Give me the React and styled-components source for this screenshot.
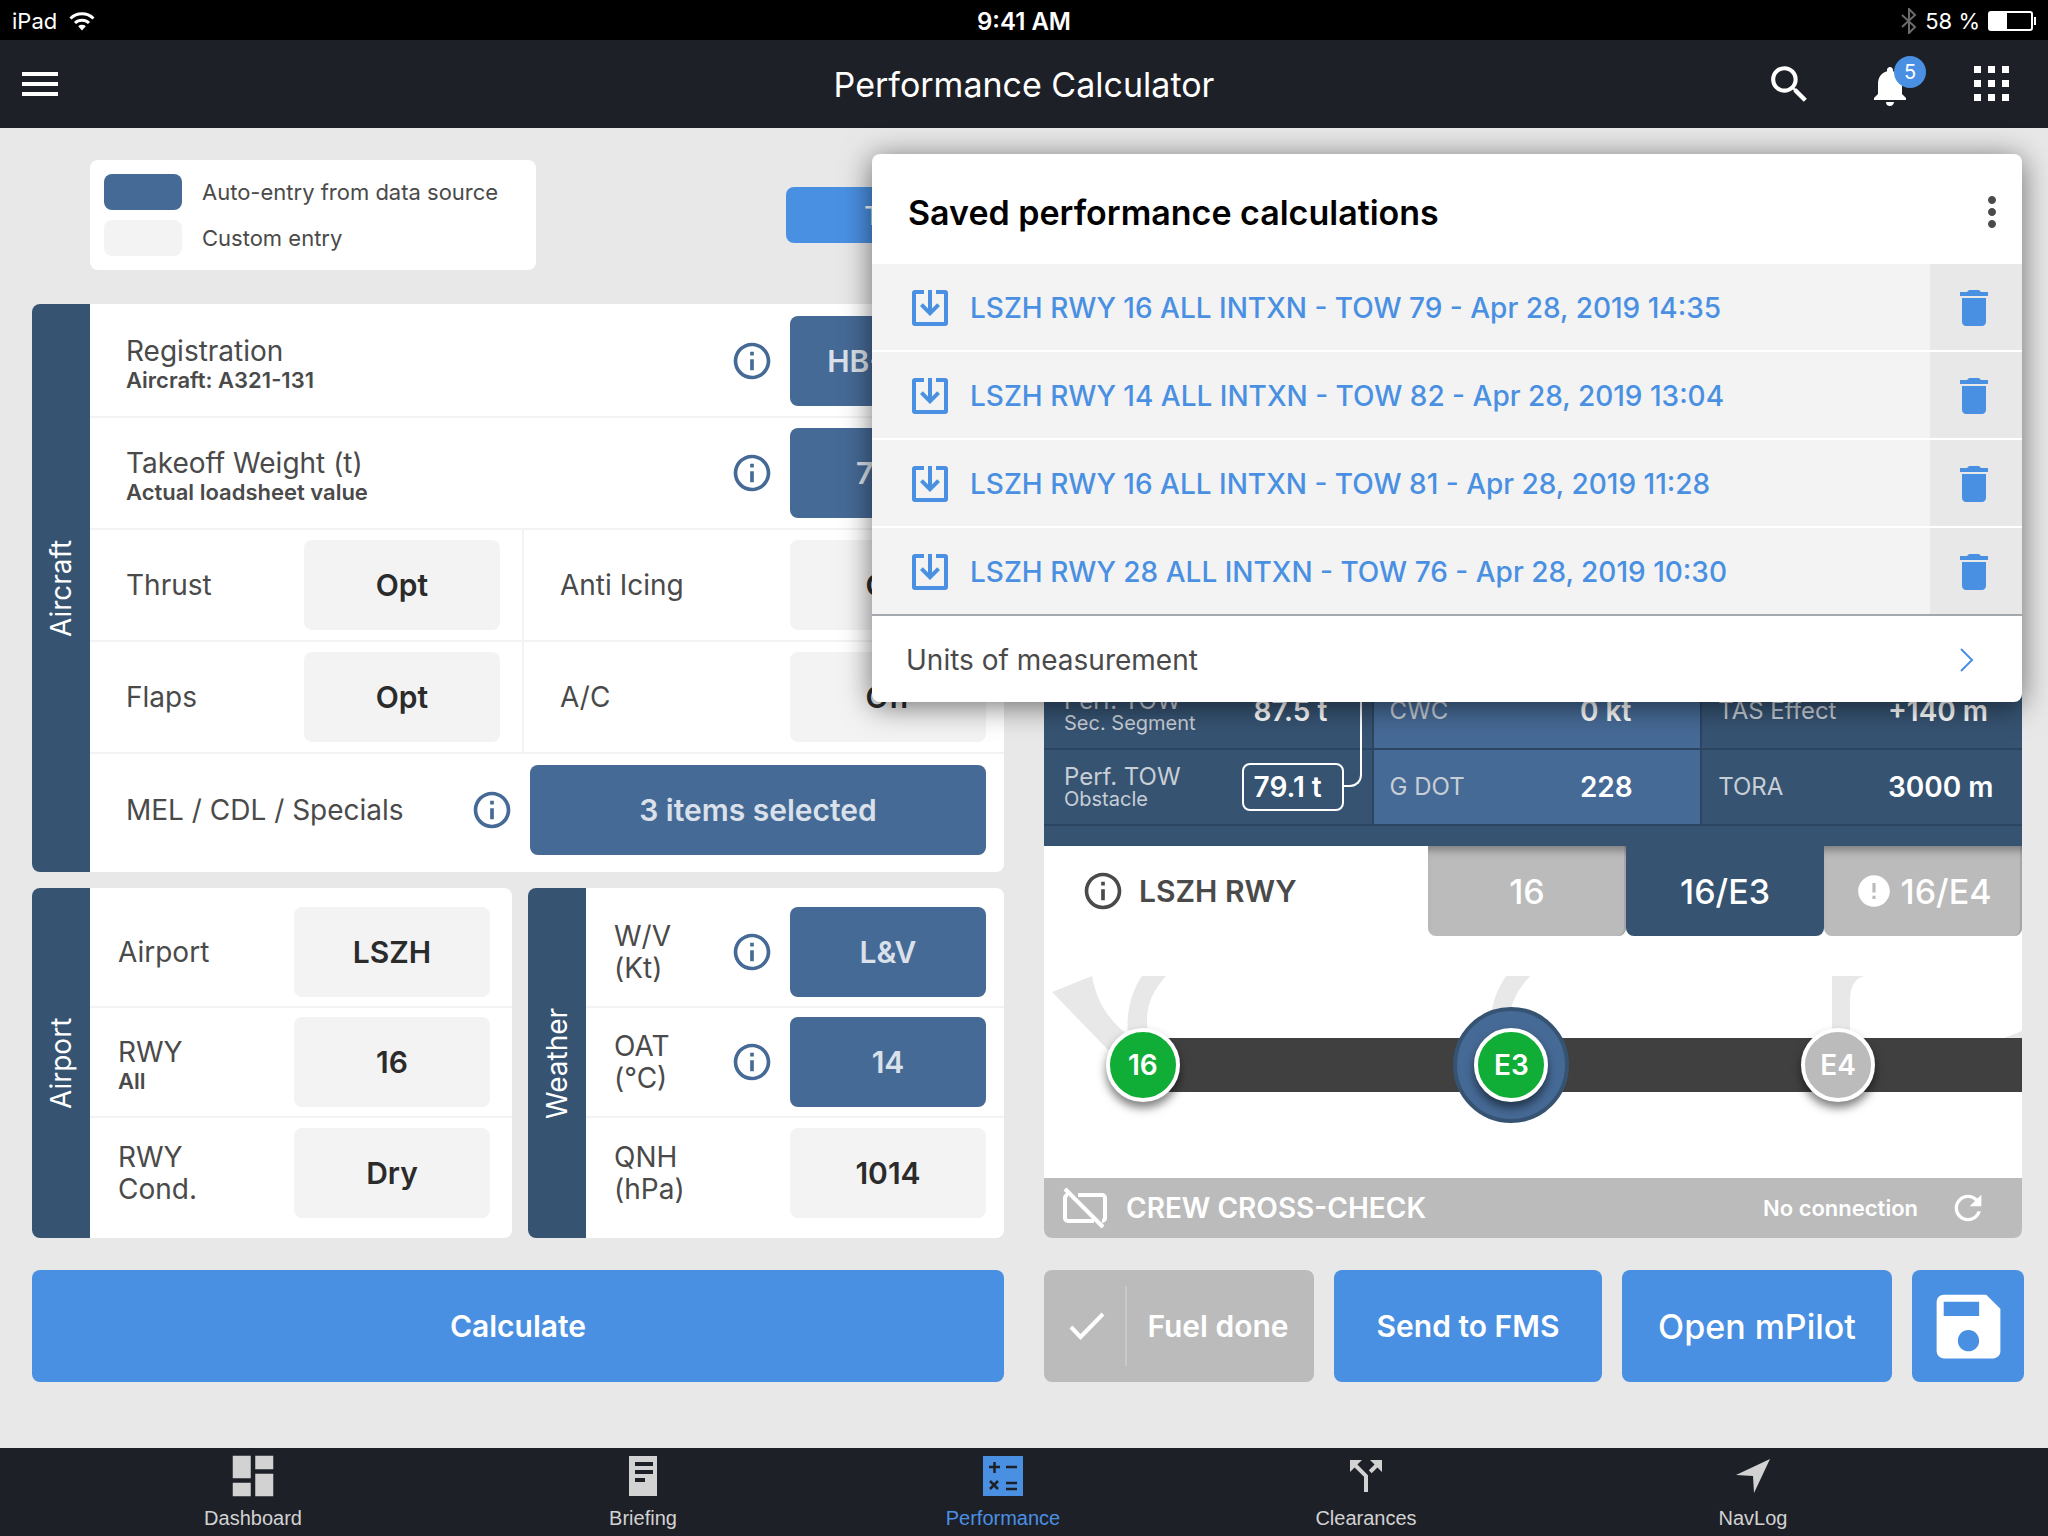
import React from "react";
import styled, { createGlobalStyle } from "styled-components";
import {
  MdSearch,
  MdNotifications,
  MdMoreVert,
  MdDelete,
  MdInfoOutline,
  MdError,
  MdRefresh,
  MdSave,
  MdDashboard,
  MdCallSplit,
} from "react-icons/md";

const GlobalStyle = createGlobalStyle`
  * {
    box-sizing: border-box;
  }
  body {
    margin: 0;
    background-color: #e8e8e8;
    color: #4a4a4a;
    font-family: Inter, "Liberation Sans", sans-serif;
  }
  button {
    font-family: inherit;
    border: 0;
    padding: 0;
    background: none;
    color: inherit;
    cursor: pointer;
  }
  svg {
    display: block;
    flex-shrink: 0;
  }
`;

const Page = styled.div`
  min-height: 100vh;
  display: flex;
  flex-direction: column;
`;

/* status bar + header */
const StatusBar = styled.div`
  height: 40px;
  padding: 2px 12px 0;
  display: grid;
  grid-template-columns: 1fr auto 1fr;
  align-items: center;
  background-color: #000;
  color: #fff;
  font-size: 22px;
`;
const StatusSide = styled.div`
  display: flex;
  align-items: center;
  justify-content: ${(props) => (props.$end ? "flex-end" : "flex-start")};
  gap: ${(props) => (props.$end ? "8px" : "12px")};
`;
const Clock = styled.div`
  font-size: 24px;
  font-weight: 600;
`;
const Header = styled.header`
  height: 88px;
  padding: 0 38px 0 22px;
  display: grid;
  grid-template-columns: 1fr auto 1fr;
  align-items: center;
  background-color: #1e2028;
  color: #fff;
`;
const HeaderStart = styled.div`
  display: flex;
  align-items: center;
`;
const HeaderTitle = styled.h1`
  margin: 0;
  padding-left: 16px;
  font-size: 34px;
  font-weight: 400;
`;
const HeaderActions = styled.div`
  display: flex;
  justify-content: flex-end;
  align-items: center;
  gap: 52px;
`;
const BellButton = styled.button`
  position: relative;
  padding-top: 4px;
`;
const AppsButton = styled.button`
  margin-left: 8px;
`;
const Badge = styled.span`
  position: absolute;
  top: -2px;
  right: -12px;
  width: 32px;
  height: 32px;
  border-radius: 50%;
  background-color: #4a90e2;
  font-size: 20px;
  line-height: 32px;
`;

/* page body */
const Main = styled.main`
  position: relative;
  flex: 1;
  padding: 32px 24px 32px 32px;
`;
const TopRow = styled.div`
  display: flex;
  align-items: center;
  gap: 250px;
  padding-left: 58px;
  margin-bottom: 34px;
`;
const Legend = styled.div`
  width: 446px;
  padding: 14px;
  display: flex;
  flex-direction: column;
  gap: 10px;
  border-radius: 8px;
  background-color: #fff;
`;
const LegendItem = styled.div`
  display: flex;
  align-items: center;
  gap: 20px;
  font-size: 22px;
`;
const Swatch = styled.span`
  width: 78px;
  height: 36px;
  border-radius: 8px;
  background-color: ${(props) => (props.$auto ? "#466a96" : "#f3f3f3")};
`;
const ModeButton = styled.button`
  width: 250px;
  height: 56px;
  border-radius: 8px;
  background-color: #4a90e2;
  color: #fff;
  font-size: 26px;
  font-weight: 500;
`;
const Columns = styled.div`
  display: grid;
  grid-template-columns: minmax(0, 972fr) minmax(0, 980fr);
  gap: 32px 40px;
`;
const Forms = styled.div`
  display: grid;
  grid-template-columns: minmax(0, 480fr) minmax(0, 476fr);
  gap: 16px;
`;
const Panel = styled.section`
  grid-column: ${(props) => (props.$wide ? "1 / -1" : "auto")};
  display: flex;
  border-radius: 8px;
  overflow: hidden;
  background-color: #fff;
`;
const PanelSide = styled.h2`
  margin: 0;
  width: 58px;
  flex-shrink: 0;
  display: flex;
  align-items: center;
  justify-content: center;
  writing-mode: vertical-rl;
  transform: rotate(180deg);
  background-color: #365372;
  color: #fff;
  font-size: 28px;
  font-weight: 400;
`;
const PanelBody = styled.div`
  flex: 1;
  min-width: 0;
  padding: ${(props) => (props.$wide ? "2px 0 6px" : "10px 0")};
`;
const Row = styled.div`
  display: flex;
  min-height: ${(props) => (props.$wide ? "112px" : "110px")};
  border-bottom: 2px solid #f3f3f3;

  &:last-child {
    border-bottom: 0;
  }
`;
const Cell = styled.div`
  flex: ${(props) => props.$grow || 1} 1 0;
  min-width: 0;
  display: flex;
  align-items: center;
  gap: 20px;
  padding-left: ${(props) => (props.$wide ? "36px" : "28px")};
  padding-right: ${(props) => (props.$inset ? "22px" : "18px")};

  & + & {
    border-left: 2px solid #f3f3f3;
  }
`;
const Label = styled.label`
  flex: 1;
  padding-top: ${(props) => (props.$sub ? "6px" : "0")};
  font-size: 28px;
  line-height: 32px;
  white-space: pre-line;
`;
const SubLabel = styled.span`
  display: block;
  font-size: 22px;
  line-height: 26px;
  font-weight: 600;
`;
const InfoButton = styled.button`
  margin: -4px;
  color: #466a96;
`;
const Field = styled.button`
  width: ${(props) => (props.$big ? "456px" : "196px")};
  height: 90px;
  border-radius: 8px;
  background-color: ${(props) => (props.$auto ? "#466a96" : "#f3f3f3")};
  color: ${(props) => (props.$auto ? "#dae1ea" : "#2b2b2b")};
  font-size: 30px;
  font-weight: 600;
`;

/* results card */
const Card = styled.section`
  margin-right: 2px;
  display: flex;
  flex-direction: column;
  border-radius: 8px;
  overflow: hidden;
  background-color: #fff;
`;
const Results = styled.div`
  flex: 1;
  display: flex;
  flex-direction: column;
  justify-content: flex-end;
  padding-bottom: 20px;
  background-color: #365372;
`;
const ResultTable = styled.table`
  width: 100%;
  table-layout: fixed;
  border-collapse: collapse;
`;
const ResultName = styled.th`
  height: 76px;
  padding: 0 0 0 ${(props) => (props.$first ? "20px" : "16px")};
  border-bottom: 2px solid #2c4560;
  border-left: ${(props) => (props.$first ? "0" : "2px solid #2c4560")};
  background-color: ${(props) => (props.$light ? "#466a96" : "transparent")};
  color: #c8ced6;
  font-size: 24px;
  line-height: 24px;
  font-weight: 400;
  text-align: left;
`;
const ResultNote = styled.span`
  display: block;
  font-size: 20px;
  line-height: 20px;
`;
const ResultValue = styled.td`
  padding: 0;
  border-bottom: 2px solid #2c4560;
  background-color: ${(props) => (props.$light ? "#466a96" : "transparent")};
  color: #fff;
  font-size: 28px;
  font-weight: 600;
  white-space: nowrap;
`;
const ValueBox = styled.span`
  position: relative;
  display: inline-flex;
  align-items: center;
  min-width: 102px;
  height: 48px;
  padding: 0 10px;
  border: 2px solid ${(props) => (props.$marked ? "#fff" : "transparent")};
  border-radius: 8px;
`;
const Connector = styled.span`
  position: absolute;
  left: 100%;
  bottom: 50%;
  width: 20px;
  height: 120px;
  border: solid #fff;
  border-width: 0 2px 2px 0;
  border-radius: 0 0 12px 0;
`;
const RunwayBar = styled.div`
  display: flex;
  height: 90px;
`;
const RunwayTitle = styled.div`
  flex: 1;
  display: flex;
  align-items: center;
  gap: 14px;
  padding-left: 37px;
  font-size: 30px;
  font-weight: 600;
`;
const RunwayTab = styled.button`
  width: 198px;
  display: flex;
  align-items: center;
  justify-content: center;
  gap: 8px;
  border-radius: 0 0 8px 8px;
  background-color: ${(props) => (props.$active ? "#365372" : "#bbb")};
  box-shadow: ${(props) =>
    props.$active
      ? "none"
      : "inset 0 10px 8px -6px rgba(0, 0, 0, 0.35), inset -2px 0 0 #a9a9a9"};
  color: #fff;
  font-size: 34px;
  font-weight: 500;
`;
const RunwayMap = styled.div`
  position: relative;
  margin-top: 40px;
`;
const MapDrawing = styled.svg`
  width: 100%;
  height: auto;
`;
const Node = styled.button`
  position: absolute;
  top: 44%;
  left: ${(props) => props.$left}%;
  transform: translate(-50%, -50%);
  width: 74px;
  height: 74px;
  border: 4px solid #fff;
  border-radius: 50%;
  background-color: ${(props) => (props.$ok ? "#10ad37" : "#bbb")};
  box-shadow: 0 6px 10px rgba(0, 0, 0, 0.5);
  color: #fff;
  font-size: 28px;
  font-weight: 600;
`;
const Halo = styled.span`
  position: absolute;
  top: 44%;
  left: ${(props) => props.$left}%;
  transform: translate(-50%, -50%);
  width: 116px;
  height: 116px;
  border: 4px solid #365372;
  border-radius: 50%;
  background-color: #466a96;
`;
const CrewBar = styled.div`
  height: 60px;
  padding: 0 34px 0 18px;
  display: flex;
  align-items: center;
  gap: 18px;
  background-color: #bbb;
  color: #fff;
  font-size: 28px;
  font-weight: 600;
`;
const CrewStatus = styled.span`
  margin-left: auto;
  padding-right: 12px;
  font-size: 22px;
`;

/* bottom actions */
const Action = styled.button`
  height: 112px;
  display: flex;
  align-items: center;
  justify-content: center;
  border-radius: 8px;
  background-color: ${(props) => (props.$done ? "#bbb" : "#4a90e2")};
  color: #fff;
  font-size: ${(props) => (props.$large ? "34px" : "30px")};
  font-weight: ${(props) => (props.$large ? 500 : 600)};
`;
const Actions = styled.div`
  display: grid;
  grid-template-columns: minmax(0, 270fr) minmax(0, 268fr) minmax(0, 270fr) 112px;
  gap: 20px;
`;
const CheckPart = styled.span`
  height: 80px;
  padding-right: 20px;
  margin-right: 20px;
  display: flex;
  align-items: center;
  border-right: 2px solid #c9c9c9;
`;

/* saved calculations popover */
const Popover = styled.aside`
  position: absolute;
  top: 26px;
  right: 26px;
  width: 1150px;
  max-width: calc(100% - 52px);
  border-radius: 8px;
  overflow: hidden;
  background-color: #fff;
  box-shadow: 0 4px 30px rgba(0, 0, 0, 0.55);
`;
const PopoverHead = styled.div`
  height: 110px;
  padding: 6px 6px 0 36px;
  display: flex;
  align-items: center;
  justify-content: space-between;
`;
const PopoverTitle = styled.h2`
  margin: 0;
  color: #000;
  font-size: 34px;
  font-weight: 600;
`;
const SavedList = styled.ul`
  margin: 0;
  padding: 0;
  list-style: none;
  display: flex;
  flex-direction: column;
  gap: 2px;
  border-bottom: 2px solid #a3a7ae;
`;
const SavedItem = styled.li`
  height: 86px;
  display: flex;
  background-color: #f3f3f3;
  color: #4a90e2;
`;
const LoadButton = styled.button`
  flex: 1;
  display: flex;
  align-items: center;
  gap: 22px;
  padding: 2px 0 0 40px;
  font-size: 28px;
  font-weight: 500;
`;
const DeleteButton = styled.button`
  width: 92px;
  padding: 2px 4px 0 0;
  display: flex;
  align-items: center;
  justify-content: center;
  background-color: #e8e8e8;
`;
const UnitsButton = styled.button`
  width: 100%;
  height: 86px;
  padding: 2px 48px 0 34px;
  display: flex;
  align-items: center;
  justify-content: space-between;
  font-size: 28px;
`;

/* tab bar */
const TabBar = styled.nav`
  height: 88px;
  padding: 0 235px 0 193px;
  display: grid;
  grid-template-columns: 130fr 120fr 121fr 129fr 120px;
  background-color: #1e2028;
  font-family: "Liberation Sans", Arial, sans-serif;
`;
const TabLink = styled.a`
  width: 120px;
  padding-top: 2px;
  display: flex;
  flex-direction: column;
  align-items: center;
  color: ${(props) => (props.$active ? "#4a90e2" : "#d2d2d2")};
  font-size: 20px;
  line-height: 24px;
  text-decoration: none;
`;
const TabIcon = styled.span`
  height: 52px;
  margin-bottom: 4px;
  display: flex;
  align-items: center;
`;

const WifiIcon = () => (
  <svg width="26" height="20" viewBox="0 0 26 20" fill="none" stroke="#fff" strokeWidth="3">
    <path d="M1.5 7.5a16.5 16.5 0 0 1 23 0" />
    <path d="M6 12a10 10 0 0 1 14 0" />
    <path d="M13 19.5l-3.8-4.3a5.6 5.6 0 0 1 7.6 0z" fill="#fff" stroke="none" />
  </svg>
);

const BluetoothIcon = () => (
  <svg width="16" height="26" viewBox="0 0 16 26" fill="none" stroke="#6b6b6b" strokeWidth="2">
    <path d="M1 7l13 12-6 6V1l6 6L1 19" />
  </svg>
);

const BatteryIcon = () => (
  <svg width="48" height="20" viewBox="0 0 48 20" fill="none">
    <rect x="1" y="1" width="43" height="18" rx="2" stroke="#fff" strokeWidth="2" />
    <rect x="2" y="2" width="17" height="16" fill="#fff" />
    <path d="M46 6h2v8h-2z" fill="#fff" />
  </svg>
);

const MenuIcon = () => (
  <svg width="36" height="24" viewBox="0 0 36 24" fill="#fff">
    <path d="M0 0h36v4H0zM0 10h36v4H0zM0 20h36v4H0z" />
  </svg>
);

const AppsIcon = () => (
  <svg width="36" height="36" viewBox="0 0 36 36" fill="#fff">
    {[0, 14, 28].map((y) =>
      [0, 14, 28].map((x) => <rect key={`${x}-${y}`} x={x} y={y} width="7" height="7" />)
    )}
  </svg>
);

const LoadIcon = () => (
  <svg width="36" height="36" viewBox="0 0 36 36" fill="currentColor">
    <path d="M12 0v4H4v28h28V4h-8V0h9a3 3 0 0 1 3 3v30a3 3 0 0 1-3 3H3a3 3 0 0 1-3-3V3a3 3 0 0 1 3-3z" />
    <path d="M16 0h4v18.500l5.200-5.200 2.800 2.800-10 10-10-10 2.800-2.800 5.200 5.200z" />
  </svg>
);

const ChevronIcon = () => (
  <svg width="14" height="24" viewBox="0 0 14 24" fill="none" stroke="#4a90e2" strokeWidth="2">
    <path d="M1 1l11 11L1 23" />
  </svg>
);

const CheckIcon = () => (
  <svg width="36" height="28" viewBox="0 0 36 28" fill="none" stroke="#fff" strokeWidth="4">
    <path d="M2 15l9.500 10L34 2" />
  </svg>
);

const NoScreenIcon = () => (
  <svg width="46" height="42" viewBox="0 0 46 42" fill="none" stroke="#fff" strokeWidth="4">
    <path d="M16 8h24a3 3 0 0 1 3 3v20a3 3 0 0 1-3 3" />
    <path d="M6 8a3 3 0 0 0-3 3v20a3 3 0 0 0 3 3h26" />
    <path d="M3 2l38 38" />
  </svg>
);

const BriefingIcon = () => (
  <svg width="28" height="40" viewBox="0 0 28 40">
    <path fill="#d2d2d2" d="M0 0h28v40H0z" />
    <path fill="#1e2028" d="M6 6h18v4H6zM6 14h18v4H6zM6 22h10v4H6z" />
  </svg>
);

const CalculatorIcon = () => (
  <svg width="40" height="40" viewBox="0 0 40 40" fill="none">
    <path fill="#4a90e2" d="M0 0h40v40H0z" />
    <path
      stroke="#1e2028"
      strokeWidth="2.5"
      d="M6 11h11M11.500 6v11M23 11h11M7 25l8 8M15 25l-8 8M23 27h11M23 33h11"
    />
  </svg>
);

const NavIcon = () => (
  <svg width="34" height="34" viewBox="0 0 34 34" fill="currentColor">
    <path d="M34 0L0 16l17 1 1 17z" />
  </svg>
);

const saved = [
  "LSZH RWY 16 ALL INTXN - TOW 79 - Apr 28, 2019 14:35",
  "LSZH RWY 14 ALL INTXN - TOW 82 - Apr 28, 2019 13:04",
  "LSZH RWY 16 ALL INTXN - TOW 81 - Apr 28, 2019 11:28",
  "LSZH RWY 28 ALL INTXN - TOW 76 - Apr 28, 2019 10:30",
];

const tabs = [
  { name: "Dashboard", icon: <MdDashboard size={54} /> },
  { name: "Briefing", icon: <BriefingIcon /> },
  { name: "Performance", icon: <CalculatorIcon />, active: true },
  { name: "Clearances", icon: <MdCallSplit size={48} /> },
  { name: "NavLog", icon: <NavIcon /> },
];

function Entry({ id, label, sub, value, info, auto, big, wide, inset, grow }) {
  return (
    <Cell $wide={wide} $inset={inset} $grow={grow}>
      <Label htmlFor={id} $sub={sub}>
        {label}
        {sub && <SubLabel>{sub}</SubLabel>}
      </Label>
      {info && (
        <InfoButton type="button" aria-label={`About ${id}`}>
          <MdInfoOutline size={44} />
        </InfoButton>
      )}
      <Field id={id} type="button" $auto={auto} $big={big}>
        {value}
      </Field>
    </Cell>
  );
}

function AircraftPanel() {
  return (
    <Panel $wide>
      <PanelSide>Aircraft</PanelSide>
      <PanelBody $wide>
        <Row $wide>
          <Entry wide info auto id="registration" label="Registration" sub="Aircraft: A321-131" value="HB-JMV" />
        </Row>
        <Row $wide>
          <Entry wide info auto id="weight" label="Takeoff Weight (t)" sub="Actual loadsheet value" value="79.0" />
        </Row>
        <Row $wide>
          <Entry wide inset grow={374} id="thrust" label="Thrust" value="Opt" />
          <Entry wide grow={426} id="anti-icing" label="Anti Icing" value="Off" />
        </Row>
        <Row $wide>
          <Entry wide inset grow={374} id="flaps" label="Flaps" value="Opt" />
          <Entry wide grow={426} id="ac" label="A/C" value="Off" />
        </Row>
        <Row $wide>
          <Entry wide info auto big id="mel" label="MEL / CDL / Specials" value="3 items selected" />
        </Row>
      </PanelBody>
    </Panel>
  );
}

function AirportPanel() {
  return (
    <Panel>
      <PanelSide>Airport</PanelSide>
      <PanelBody>
        <Row>
          <Entry inset id="airport" label="Airport" value="LSZH" />
        </Row>
        <Row>
          <Entry inset id="rwy" label="RWY" sub="All" value="16" />
        </Row>
        <Row>
          <Entry inset id="rwy-cond" label={"RWY\nCond."} value="Dry" />
        </Row>
      </PanelBody>
    </Panel>
  );
}

function WeatherPanel() {
  return (
    <Panel>
      <PanelSide>Weather</PanelSide>
      <PanelBody>
        <Row>
          <Entry info auto id="wind" label={"W/V\n(Kt)"} value="L&V" />
        </Row>
        <Row>
          <Entry info auto id="oat" label={"OAT\n(°C)"} value="14" />
        </Row>
        <Row>
          <Entry id="qnh" label={"QNH\n(hPa)"} value="1014" />
        </Row>
      </PanelBody>
    </Panel>
  );
}

function ResultsCard() {
  return (
    <Card>
      <Results>
        <ResultTable>
          <colgroup>
            <col width="20.2%" />
            <col width="13.4%" />
            <col width="21.2%" />
            <col width="12.4%" />
            <col width="19.1%" />
            <col />
          </colgroup>
          <tbody>
            <tr>
              <ResultName $first>
                Perf. TOW<ResultNote>Sec. Segment</ResultNote>
              </ResultName>
              <ResultValue>
                <ValueBox>87.5 t</ValueBox>
              </ResultValue>
              <ResultName $light>CWC</ResultName>
              <ResultValue $light>0 kt</ResultValue>
              <ResultName>TAS Effect</ResultName>
              <ResultValue>+140 m</ResultValue>
            </tr>
            <tr>
              <ResultName $first>
                Perf. TOW<ResultNote>Obstacle</ResultNote>
              </ResultName>
              <ResultValue>
                <ValueBox $marked>
                  79.1 t
                  <Connector />
                </ValueBox>
              </ResultValue>
              <ResultName $light>G DOT</ResultName>
              <ResultValue $light>228</ResultValue>
              <ResultName>TORA</ResultName>
              <ResultValue>3000 m</ResultValue>
            </tr>
          </tbody>
        </ResultTable>
      </Results>
      <RunwayBar>
        <RunwayTitle>
          <MdInfoOutline size={44} />
          LSZH RWY
        </RunwayTitle>
        <RunwayTab type="button">16</RunwayTab>
        <RunwayTab type="button" $active>
          16/E3
        </RunwayTab>
        <RunwayTab type="button">
          <MdError size={38} />
          16/E4
        </RunwayTab>
      </RunwayBar>
      <RunwayMap>
        <MapDrawing viewBox="0 0 978 202">
          <g fill="#e8e8e8">
            <path d="M8 16L48 0c4 22 14 44 40 62L72 82z" />
            <path d="M98 0h24c-18 20-22 38-17 62H84c-2-24 2-44 14-62z" />
            <path d="M462 0h24c-16 18-22 32-22 62h-17c-2-26 3-44 15-62z" />
            <path d="M788 0h32c-12 4-14 14-14 28v34h-18z" />
            <path d="M960 62l18-7v7z" />
          </g>
          <path fill="#404040" d="M99 62h879v54H99z" />
        </MapDrawing>
        <Node type="button" $left={10.1} $ok>
          16
        </Node>
        <Halo $left={47.8} />
        <Node type="button" $left={47.8} $ok>
          E3
        </Node>
        <Node type="button" $left={81.2}>
          E4
        </Node>
      </RunwayMap>
      <CrewBar>
        <NoScreenIcon />
        CREW CROSS-CHECK
        <CrewStatus>No connection</CrewStatus>
        <button type="button" aria-label="Retry">
          <MdRefresh size={40} />
        </button>
      </CrewBar>
    </Card>
  );
}

function SavedPopover() {
  return (
    <Popover>
      <PopoverHead>
        <PopoverTitle>Saved performance calculations</PopoverTitle>
        <button type="button" aria-label="More">
          <MdMoreVert size={48} />
        </button>
      </PopoverHead>
      <SavedList>
        {saved.map((item) => (
          <SavedItem key={item}>
            <LoadButton type="button">
              <LoadIcon />
              {item}
            </LoadButton>
            <DeleteButton type="button" aria-label="Delete">
              <MdDelete size={48} />
            </DeleteButton>
          </SavedItem>
        ))}
      </SavedList>
      <UnitsButton type="button">
        Units of measurement
        <ChevronIcon />
      </UnitsButton>
    </Popover>
  );
}

function App() {
  return (
    <Page>
      <GlobalStyle />
      <StatusBar>
        <StatusSide>
          iPad
          <WifiIcon />
        </StatusSide>
        <Clock>9:41 AM</Clock>
        <StatusSide $end>
          <BluetoothIcon />
          58 %
          <BatteryIcon />
        </StatusSide>
      </StatusBar>
      <Header>
        <HeaderStart>
          <button type="button" aria-label="Menu">
            <MenuIcon />
          </button>
        </HeaderStart>
        <HeaderTitle>Performance Calculator</HeaderTitle>
        <HeaderActions>
          <button type="button" aria-label="Search">
            <MdSearch size={49} />
          </button>
          <BellButton type="button" aria-label="Notifications">
            <MdNotifications size={48} />
            <Badge>5</Badge>
          </BellButton>
          <AppsButton type="button" aria-label="Apps">
            <AppsIcon />
          </AppsButton>
        </HeaderActions>
      </Header>
      <Main>
        <TopRow>
          <Legend>
            <LegendItem>
              <Swatch $auto />
              Auto-entry from data source
            </LegendItem>
            <LegendItem>
              <Swatch />
              Custom entry
            </LegendItem>
          </Legend>
          <ModeButton type="button">Takeoff</ModeButton>
        </TopRow>
        <Columns>
          <Forms>
            <AircraftPanel />
            <AirportPanel />
            <WeatherPanel />
          </Forms>
          <ResultsCard />
          <Action type="button">Calculate</Action>
          <Actions>
            <Action type="button" $done>
              <CheckPart>
                <CheckIcon />
              </CheckPart>
              Fuel done
            </Action>
            <Action type="button">Send to FMS</Action>
            <Action type="button" $large>
              Open mPilot
            </Action>
            <Action type="button" aria-label="Save">
              <MdSave size={85} />
            </Action>
          </Actions>
        </Columns>
        <SavedPopover />
      </Main>
      <TabBar>
        {tabs.map((tab) => (
          <TabLink key={tab.name} href="#" $active={tab.active}>
            <TabIcon>{tab.icon}</TabIcon>
            {tab.name}
          </TabLink>
        ))}
      </TabBar>
    </Page>
  );
}

export default App;
